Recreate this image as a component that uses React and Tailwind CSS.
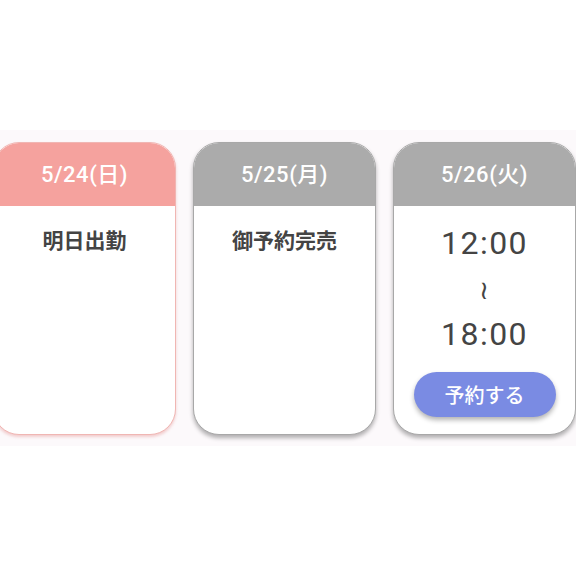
import React from "react";

const DayCard = ({ date, day, pink, children }) => (
  <div
    className={`w-[183px] h-[293px] shrink-0 rounded-[26px] overflow-hidden bg-white border flex flex-col ${
      pink
        ? "border-[#f0b6b3] shadow-[0_2px_3px_rgba(230,150,150,0.45)]"
        : "border-[#a8a8a8] shadow-[0_3px_4px_rgba(0,0,0,0.3)]"
    }`}
  >
    <div
      className={`h-[63px] shrink-0 flex items-center justify-center text-white text-[22px] tracking-[0.5px] font-medium font-['Roboto','Noto_Sans_CJK_JP',sans-serif] ${
        pink ? "bg-[#f5a29e]" : "bg-[#ababab]"
      }`}
    >
      {date}({day})
    </div>
    <div className="flex-1 flex flex-col items-center text-[#444]">{children}</div>
  </div>
);

export default function App() {
  return (
    <div className="w-[576px] h-[576px] bg-white overflow-hidden pt-[130px]">
      <div className="h-[316px] bg-[#fcf9fb] pt-[12px]">
        <div className="flex gap-[17px] ml-[-7px]">
          <DayCard date="5/24" day="日" pink>
            <p className="mt-[18px] text-[21px] font-bold font-['Noto_Sans_CJK_JP',sans-serif]">
              明日出勤
            </p>
          </DayCard>
          <DayCard date="5/25" day="月">
            <p className="mt-[18px] text-[21px] font-bold font-['Noto_Sans_CJK_JP',sans-serif]">
              御予約完売
            </p>
          </DayCard>
          <DayCard date="5/26" day="火">
            <p className="mt-[17px] text-[32px] leading-[40px] tracking-[1.5px] font-normal font-['Roboto',sans-serif]">
              12:00
            </p>
            <p className="mt-[8px] h-[40px] flex items-center justify-center text-[26px] leading-none rotate-90 font-['DejaVu_Sans',sans-serif]">
              ~
            </p>
            <p className="mt-[3px] text-[32px] leading-[40px] tracking-[1.5px] font-normal font-['Roboto',sans-serif]">
              18:00
            </p>
            <button className="mt-[18px] w-[142px] h-[45px] rounded-full bg-[#7a8be3] text-white text-[20px] font-medium shadow-[0_3px_5px_rgba(0,0,0,0.3)] font-['Noto_Sans_CJK_JP',sans-serif]">
              予約する
            </button>
          </DayCard>
        </div>
      </div>
    </div>
  );
}
